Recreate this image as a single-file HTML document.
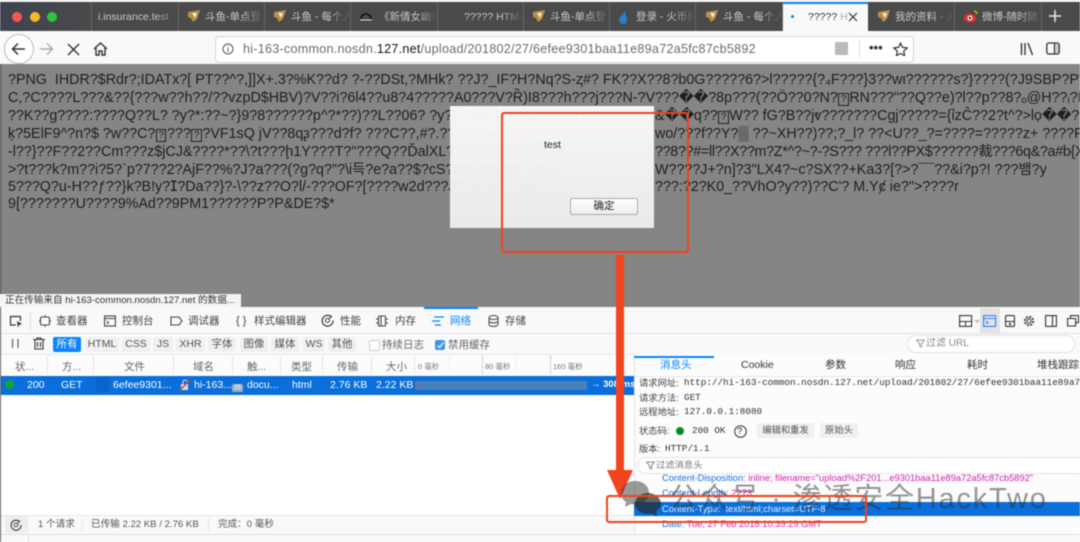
<!DOCTYPE html>
<html><head><meta charset="utf-8"><style>
html,body{margin:0;padding:0;width:1080px;height:542px;overflow:hidden;background:#fff}
#p{position:absolute;left:0;top:0;width:1080px;height:542px;overflow:hidden;filter:blur(.45px);font-family:"Liberation Sans","Noto Sans CJK SC",sans-serif;color:#333}
#p div,#p span,#p svg{position:absolute}
#p .q{position:static;border:1px solid #222;font-size:10px;padding:0 1.5px;margin:0 .5px}
.t{white-space:nowrap;line-height:14px;font-size:10.5px}
.m{font-family:"Liberation Mono","Noto Sans CJK SC",monospace;font-size:9.3px}
.tab{top:2px;height:29px;width:86px;border-right:1px solid #666;overflow:hidden}
.tab .t{color:#c9c9c9;top:8px;font-size:10.5px}
.tab i{position:absolute;right:0;top:0;width:22px;height:29px;background:linear-gradient(90deg,rgba(74,74,74,0),#4a4a4a)}
.c{color:#1e1e1e;font-size:14.3px;line-height:18px;height:18px;white-space:pre}
.chip{top:337px;height:15px;background:#f0f0f2;border-radius:2px;text-align:center;line-height:15px;font-size:10.5px;color:#555;white-space:nowrap}
.h{top:360px;color:#666}
.w{top:378px;color:#fff}
.vs{width:1px;background:#e4e4e6}
</style></head><body><div id="p">

<!-- tab bar -->
<div style="left:0;top:0;width:1080px;height:2px;background:#f3f3f3"></div>
<div style="left:0;top:2px;width:1080px;height:29px;background:#4a4a4a"></div>
<div style="left:0;top:2px;width:91px;height:29px;background:linear-gradient(90deg,#3d4350,#4a4a4a)"></div>
<div style="left:12px;top:12px;width:10px;height:10px;border-radius:50%;background:#f8584f"></div>
<div style="left:30px;top:12px;width:10px;height:10px;border-radius:50%;background:#fbb52c"></div>
<div style="left:47px;top:12px;width:10px;height:10px;border-radius:50%;background:#2ac83f"></div>
<div style="left:91px;top:2px;width:1px;height:29px;background:#666"></div>

<div class="tab" style="left:92px"><span class="t" style="left:6px">i.insurance.test</span><i></i></div>
<div class="tab" style="left:178px"><svg style="left:9px;top:7px" width="14" height="14" viewBox="0 0 14 14"><path d="M1 3l12-2-3 9-4 3-2-4-3-1z" fill="#b98f45"/><path d="M5 4l5 0-2 5z" fill="#eee"/></svg><span class="t" style="left:27px">斗鱼-单点登</span><i></i></div>
<div class="tab" style="left:264px"><svg style="left:9px;top:7px" width="14" height="14" viewBox="0 0 14 14"><path d="M1 3l12-2-3 9-4 3-2-4-3-1z" fill="#b98f45"/><path d="M5 4l5 0-2 5z" fill="#eee"/></svg><span class="t" style="left:27px">斗鱼 - 每个人</span><i></i></div>
<div class="tab" style="left:351px"><svg style="left:8px;top:8px" width="14" height="12" viewBox="0 0 14 12"><path d="M2 9a5 5 0 0 1 10 0" fill="none" stroke="#111" stroke-width="1.6"/><path d="M1 10h12" stroke="#ddd"/></svg><span class="t" style="left:28px">《新倩女幽魂</span><i></i></div>
<div class="tab" style="left:437px"><span class="t" style="left:27px">????? HTML</span><i></i></div>
<div class="tab" style="left:523px"><svg style="left:9px;top:7px" width="14" height="14" viewBox="0 0 14 14"><path d="M1 3l12-2-3 9-4 3-2-4-3-1z" fill="#b98f45"/><path d="M5 4l5 0-2 5z" fill="#eee"/></svg><span class="t" style="left:27px">斗鱼-单点登</span><i></i></div>
<div class="tab" style="left:609px"><svg style="left:8px;top:7px" width="12" height="15" viewBox="0 0 12 15"><path d="M8 1C8 5 2 7 2 11a4 4 0 0 0 8 0C10 8 8 5 8 1z" fill="#2a7fd0"/></svg><span class="t" style="left:27px">登录 - 火币网</span><i></i></div>
<div class="tab" style="left:696px"><svg style="left:9px;top:7px" width="14" height="14" viewBox="0 0 14 14"><path d="M1 3l12-2-3 9-4 3-2-4-3-1z" fill="#b98f45"/><path d="M5 4l5 0-2 5z" fill="#eee"/></svg><span class="t" style="left:27px">斗鱼 - 每个人</span><i></i></div>
<div class="tab" style="left:868px"><svg style="left:9px;top:7px" width="14" height="14" viewBox="0 0 14 14"><path d="M1 3l12-2-3 9-4 3-2-4-3-1z" fill="#b98f45"/><path d="M5 4l5 0-2 5z" fill="#eee"/></svg><span class="t" style="left:27px">我的资料 - 火</span><i></i></div>
<div class="tab" style="left:955px"><svg style="left:8px;top:7px" width="16" height="14" viewBox="0 0 16 14"><ellipse cx="7" cy="9" rx="6" ry="4.5" fill="#e0352b"/><circle cx="7" cy="9" r="2.4" fill="#fff"/><circle cx="7" cy="9" r="1.2" fill="#222"/><path d="M11 2a3 3 0 0 1 3 3" fill="none" stroke="#f5a623" stroke-width="1.4"/></svg><span class="t" style="left:27px">微博-随时随</span><i></i></div>
<svg style="left:1048px;top:9px" width="14" height="14" viewBox="0 0 14 14"><path d="M7 1v12M1 7h12" stroke="#e6e6e6" stroke-width="1.5"/></svg>

<div style="left:783px;top:2px;width:85px;height:29px;background:#f9f9fa"></div>
<div style="left:783px;top:2px;width:85px;height:2px;background:#0a84ff"></div>
<div style="left:791px;top:15px;width:3px;height:3px;border-radius:50%;background:#0a84ff"></div>
<span class="t" style="left:808px;top:10px;color:#333">????? <span style="position:static;color:#aaa">H</span></span>
<svg style="left:848px;top:12px" width="10" height="10" viewBox="0 0 10 10"><path d="M1 1l8 8M9 1l-8 8" stroke="#333" stroke-width="1.2"/></svg>

<!-- toolbar -->
<div style="left:0;top:31px;width:1080px;height:33px;background:#f9f9fa"></div>
<div style="left:4px;top:34px;width:28px;height:28px;border-radius:50%;background:#fff;border:1px solid #bbb"></div>
<svg style="left:11px;top:42px" width="15" height="14" viewBox="0 0 15 14"><path d="M14 7H2M7 1.500L1.500 7 7 12.500" fill="none" stroke="#333" stroke-width="1.5"/></svg>
<svg style="left:39px;top:42px" width="15" height="14" viewBox="0 0 15 14"><path d="M1 7h12M8 1.500L13.500 7 8 12.500" fill="none" stroke="#aaa" stroke-width="1.4"/></svg>
<svg style="left:67px;top:43px" width="13" height="13" viewBox="0 0 13 13"><path d="M1 1l11 11M12 1L1 12" stroke="#333" stroke-width="1.4"/></svg>
<svg style="left:93px;top:42px" width="15" height="14" viewBox="0 0 15 14"><path d="M1 7l6.500-6L14 7M3 6v7h3V9h3v4h3V6" fill="none" stroke="#333" stroke-width="1.4"/></svg>
<div style="left:215px;top:36px;width:697px;height:25px;background:#fff;border:1px solid #d4d4d4;border-radius:4px"></div>
<svg style="left:222px;top:43px" width="12" height="12" viewBox="0 0 12 12"><circle cx="6" cy="6" r="5" fill="none" stroke="#555"/><path d="M6 5v4M6 3v1" stroke="#555"/></svg>
<span class="t" style="left:243px;top:42px;font-size:12.6px;letter-spacing:.02em;color:#6b6b6b">hi-163-common.nosdn.<span style="position:static;color:#111">127.net</span>/upload/201802/27/6efee9301baa11e89a72a5fc87cb5892</span>
<div style="left:835px;top:42px;width:13px;height:13px;background:repeating-conic-gradient(#999 0 25%,#ddd 0 50%) 0 0/3px 3px"></div>
<div style="left:859px;top:39px;width:1px;height:20px;background:#ddd"></div>
<span class="t" style="left:869px;top:41px;font-size:13px;font-weight:bold;color:#333">•••</span>
<svg style="left:893px;top:42px" width="15" height="14" viewBox="0 0 15 14"><path d="M7.500 1l2 4.400 4.800.5-3.600 3.200 1 4.700-4.200-2.400-4.200 2.400 1-4.700L.7 5.900l4.800-.5z" fill="none" stroke="#333" stroke-width="1.2"/></svg>
<svg style="left:1020px;top:42px" width="14" height="14" viewBox="0 0 14 14"><path d="M1.500 1v12M5 1v12M8 1l4.500 12" fill="none" stroke="#333" stroke-width="1.4"/></svg>
<svg style="left:1046px;top:42px" width="14" height="13" viewBox="0 0 14 13"><rect x=".8" y="1" width="12.400" height="11" rx="2" fill="none" stroke="#333" stroke-width="1.3"/><path d="M8.500 1v11" stroke="#333" stroke-width="1.3"/><rect x="9" y="2" width="3.500" height="9" fill="#ccc"/></svg>

<!-- page content -->
<div style="left:0;top:64px;width:1080px;height:243px;background:#858585"></div>
<div style="left:0;top:64px;width:1px;height:243px;background:#333"></div>
<div class="c" style="left:8px;top:71px">?PNG  IHDR?$Rdr?;IDATx?[ PT??^?,]]X+.3?%K??d? ?-??DSt,?MHk? ??J?_IF?H?Nq?S-ⱬ#? FK??X??8?b0G?????6?&gt;l?????{?₄F???}3??wι??????s?}????(?J9SBP?P"DE?$*?</div>
<div class="c" style="left:8px;top:89px">C,?C????L???&amp;??{???w??h??/??vzpD$HBV)?V??i?6l4??u8?4?????A0???V?Ȑ)I8???h???j???N-?V???��?8p???(??Ö??0?N?<span class="q">?</span>RN???"??Q??e)?l??p??8?ₒ@H??ᵢ?Ⱨ</div>
<div class="c" style="left:8px;top:107px">??K??g????:????Q??L? ?y?*:??~?}9?8??????p^?*??)??L??06? ?y?F??d2JJ??h0??,??H??</div>
<div class="c" style="left:655px;top:107px">&amp;��q??<span class="q">?</span>W?? fG?B??jⱴ???????Cgj?????={ỉzĈ??2?t^?&gt;lọ��??l?</div>
<div class="c" style="left:8px;top:125px">ķ?5ElF9^?n?$ ?w??C?<span class="q">?</span>???<span class="q">?</span>?VF1sQ jV??8qᶔ???d?f? ???C??,#?.??????ɯ?????"?</div>
<div class="c" style="left:655px;top:125px">wo/???f??Y?▒ ??~XH??)??;?_l? ??&lt;U??_?=????=?????z+ ????P???</div>
<div class="c" style="left:8px;top:143px">-l??}??F??2??Cm???z$jCJ&amp;????*??\?t???ḩ1Y???T?"???Q??ĎalXL???????v?'i$?o??</div>
<div class="c" style="left:655px;top:143px;letter-spacing:-.3px">??8??#=ll??X??m?Z*^?~?-?S??? ???l??PX$??????裁???6q&amp;?a#b{X:</div>
<div class="c" style="left:8px;top:161px">&gt;?t???k?m??i?5?`p?7??2?AjF??%?J?a???(?g?q?"?\i득?e?a??$?cS?p?"??sz??`.?n?,"</div>
<div class="c" style="left:655px;top:161px">W????J+?n]?3"LX4?~c?SX??+Ka3?[?&gt;?¯¯??&amp;i?p?! ???뱀?y</div>
<div class="c" style="left:8px;top:178px">5???Q?u-H??ƒ??}k?B!y?ⵊ?Da??}?-\??z??O?l/-???OF?[????w2d???J??d?S??r?Q?</div>
<div class="c" style="left:655px;top:178px">???:?2?K0_??VhO?y??)??C'? M.Yȼ ie?"&gt;????r</div>
<div class="c" style="left:8px;top:195px">9[???????U????9%Ad??9PM1??????P?P&amp;DE?$*</div>

<!-- dialog -->
<div style="left:450px;top:106px;width:204px;height:122px;background:linear-gradient(180deg,rgba(252,252,252,.95),rgba(238,238,238,.97))"></div>
<span class="t" style="left:544px;top:138px;font-size:10.5px;color:#222">test</span>
<div style="left:570px;top:198px;width:66px;height:15px;background:linear-gradient(#fff,#eee);border:1px solid #aaa;border-radius:2px;text-align:center;font-size:10.5px;line-height:15px;color:#222">确定</div>

<!-- status tip -->
<div style="left:0;top:294px;width:241px;height:13px;background:#f4f4f4"></div>
<span class="t" style="left:5px;top:294px;font-size:9.6px;color:#333">正在传输来自 hi-163-common.nosdn.127.net 的数据...</span>

<!-- devtools -->
<div style="left:0;top:307px;width:1080px;height:27px;background:#f9f9fa"></div>
<div style="left:0;top:333px;width:1080px;height:1px;background:#e2e2e4"></div>
<div style="left:424px;top:307px;width:54px;height:2px;background:#0a84ff"></div>
<div style="left:980px;top:308px;width:20px;height:25px;background:#e3e3e6"></div>
<svg style="left:9px;top:315px" width="14" height="13" viewBox="0 0 14 13"><path d="M7 10H1.500V1.500h10V6" fill="none" stroke="#333" stroke-width="1.2"/><path d="M8 6l5 3-3 1-1 3z" fill="#333"/></svg>
<div style="left:30px;top:311px;width:1px;height:19px;background:#e0e0e0"></div>
<svg style="left:39px;top:315px" width="12" height="12" viewBox="0 0 12 12"><rect x="1.500" y="2" width="9" height="8" rx="1.500" fill="none" stroke="#444" stroke-width="1.1"/><path d="M0 6h1.500M10.500 6H12M6 0v2M6 10v2" stroke="#444"/></svg>
<span class="t" style="left:56px;top:314px;font-size:10.5px;color:#444">查看器</span>
<svg style="left:104px;top:315px" width="12" height="12" viewBox="0 0 12 12"><rect x=".6" y="1" width="10.800" height="10" fill="none" stroke="#444" stroke-width="1.1"/><path d="M.6 3.500h10.800M3 6l1.500 1.500L3 9" fill="none" stroke="#444"/></svg>
<span class="t" style="left:122px;top:314px;font-size:10.5px;color:#444">控制台</span>
<svg style="left:170px;top:316px" width="13" height="10" viewBox="0 0 13 10"><path d="M1 1h8l3 4-3 4H1z" fill="none" stroke="#444" stroke-width="1.1"/></svg>
<span class="t" style="left:188px;top:314px;font-size:10.5px;color:#444">调试器</span>
<span class="t" style="left:236px;top:314px;font-size:11px;color:#444">{ }</span>
<span class="t" style="left:254px;top:314px;font-size:10.5px;color:#444">样式编辑器</span>
<svg style="left:321px;top:314px" width="13" height="13" viewBox="0 0 13 13"><path d="M10.500 3a5.400 5.400 0 1 0 1.500 3.500" fill="none" stroke="#444" stroke-width="1.3"/><circle cx="6.500" cy="6.500" r="2" fill="none" stroke="#444"/><path d="M8 5l3-3" stroke="#444"/></svg>
<span class="t" style="left:340px;top:314px;font-size:10.5px;color:#444">性能</span>
<svg style="left:376px;top:315px" width="12" height="12" viewBox="0 0 12 12"><rect x="2.500" y="1" width="7" height="10" rx="1" fill="none" stroke="#444" stroke-width="1.1"/><path d="M0 4h2.500M0 8h2.500M9.500 4H12M9.500 8H12M5 1v10" stroke="#444"/></svg>
<span class="t" style="left:395px;top:314px;font-size:10.5px;color:#444">内存</span>
<svg style="left:432px;top:316px" width="13" height="10" viewBox="0 0 13 10"><path d="M2 1h10M0 5h8M3 9h6" stroke="#0a84ff" stroke-width="1.2"/></svg>
<span class="t" style="left:450px;top:314px;font-size:10.5px;color:#0a84ff">网络</span>
<svg style="left:488px;top:315px" width="11" height="12" viewBox="0 0 11 12"><ellipse cx="5.500" cy="2.500" rx="4.500" ry="2" fill="none" stroke="#444"/><path d="M1 2.500v7c0 1 2 2 4.500 2s4.500-1 4.500-2v-7M1 6c0 1 2 2 4.500 2s4.500-1 4.500-2" fill="none" stroke="#444"/></svg>
<span class="t" style="left:505px;top:314px;font-size:10.5px;color:#444">存储</span>

<svg style="left:959px;top:315px" width="22" height="12" viewBox="0 0 22 12"><rect x=".6" y=".6" width="12" height="10.800" fill="none" stroke="#333" stroke-width="1.1"/><path d="M.6 6.500h12M6.600 6.500v5" stroke="#333"/><path d="M15 5h6l-3 3z" fill="#bbb"/></svg>
<svg style="left:983px;top:315px" width="14" height="12" viewBox="0 0 14 12"><rect x=".6" y=".6" width="12" height="10.800" fill="none" stroke="#2f86e6" stroke-width="1.1"/><path d="M.6 3.500h12M3 6l2 1.500L3 9" fill="none" stroke="#2f86e6"/></svg>
<svg style="left:1005px;top:315px" width="10" height="12" viewBox="0 0 10 12"><rect x=".6" y=".6" width="8.800" height="10.800" rx="1" fill="none" stroke="#333" stroke-width="1.1"/><path d="M.6 6.500h8.800" stroke="#333"/><rect x="4" y="8" width="2" height="2" fill="#333"/></svg>
<svg style="left:1023px;top:315px" width="12" height="12" viewBox="0 0 12 12"><circle cx="6" cy="6" r="2" fill="none" stroke="#333"/><circle cx="6" cy="6" r="4.200" fill="none" stroke="#333" stroke-width="1.800" stroke-dasharray="2 1.300"/></svg>
<svg style="left:1045px;top:315px" width="12" height="12" viewBox="0 0 12 12"><rect x=".6" y=".6" width="10.800" height="10.800" fill="none" stroke="#333" stroke-width="1.1"/><path d="M7.500 .6v10.800" stroke="#333" stroke-width="1.100"/></svg>
<svg style="left:1067px;top:315px" width="12" height="12" viewBox="0 0 12 12"><path d="M3.500 3V.6h8v7H9M.6 3.500h8v7.500h-8z" fill="none" stroke="#333" stroke-width="1.1"/></svg>

<div style="left:0;top:334px;width:1080px;height:20px;background:#f9f9fa"></div>
<svg style="left:11px;top:339px" width="9" height="9" viewBox="0 0 9 9"><path d="M1.500 0v9M7 0v9" stroke="#555" stroke-width="1.1"/></svg>
<svg style="left:33px;top:337px" width="12" height="13" viewBox="0 0 12 13"><path d="M0 2.500h12M4 2.500V1h4v1.500M2 2.500V12h8V2.500M4.500 5v5M7.500 5v5" fill="none" stroke="#333" stroke-width="1.1"/></svg>
<div class="chip" style="left:53px;width:28px;background:#0a84ff;color:#fff">所有</div>
<div class="chip" style="left:85px;width:34px">HTML</div>
<div class="chip" style="left:122px;width:28px">CSS</div>
<div class="chip" style="left:153px;width:20px">JS</div>
<div class="chip" style="left:176px;width:29px">XHR</div>
<div class="chip" style="left:208px;width:28px">字体</div>
<div class="chip" style="left:240px;width:28px">图像</div>
<div class="chip" style="left:271px;width:28px">媒体</div>
<div class="chip" style="left:303px;width:22px">WS</div>
<div class="chip" style="left:328px;width:28px">其他</div>
<div style="left:369px;top:340px;width:9px;height:9px;border:1px solid #ccc;border-radius:2px;background:#fff"></div>
<span class="t" style="left:382px;top:338px;color:#666">持续日志</span>
<div style="left:435px;top:340px;width:10px;height:10px;border-radius:2px;background:#3b95ee"></div>
<svg style="left:436px;top:341px" width="9" height="9" viewBox="0 0 9 9"><path d="M1.500 4.500l2 2 4-5" fill="none" stroke="#fff" stroke-width="1.200"/></svg>
<span class="t" style="left:448px;top:338px;color:#666">禁用缓存</span>
<div style="left:907px;top:335px;width:166px;height:16px;background:#fff;border:1px solid #e2e2e2;border-radius:9px"></div>
<svg style="left:916px;top:339px" width="9" height="9" viewBox="0 0 9 9"><path d="M.5 1h8L5.500 4.500V8L3.500 7V4.500z" fill="none" stroke="#999"/></svg>
<span class="t" style="left:926px;top:337px;font-size:10px;color:#888">过滤 URL</span>

<div style="left:0;top:354px;width:634px;height:22px;background:#fcfcfc;border-top:1px solid #e6e6e6"></div>
<span class="t h" style="left:15px">状...</span><div class="vs" style="left:47px;top:356px;height:18px"></div>
<span class="t h" style="left:62px">方...</span><div class="vs" style="left:93px;top:356px;height:18px"></div>
<span class="t h" style="left:124px">文件</span><div class="vs" style="left:173px;top:356px;height:18px"></div>
<span class="t h" style="left:193px">域名</span><div class="vs" style="left:232px;top:356px;height:18px"></div>
<span class="t h" style="left:247px">触...</span><div class="vs" style="left:280px;top:356px;height:18px"></div>
<span class="t h" style="left:291px">类型</span><div class="vs" style="left:322px;top:356px;height:18px"></div>
<span class="t h" style="left:337px">传输</span><div class="vs" style="left:371px;top:356px;height:18px"></div>
<span class="t h" style="left:386px">大小</span><div class="vs" style="left:414px;top:356px;height:18px"></div>
<span class="t" style="left:418px;top:360px;font-size:7.5px;color:#777">0 毫秒</span>
<span class="t" style="left:485px;top:360px;font-size:7.5px;color:#777">80 毫秒</span>
<span class="t" style="left:553px;top:360px;font-size:7.5px;color:#777">160 毫秒</span>
<div style="left:482px;top:356px;height:18px;border-left:1px dotted #aaa"></div>
<div style="left:550px;top:356px;height:18px;border-left:1px dotted #aaa"></div>
<div style="left:449px;top:356px;height:18px;width:1px;background:#eee"></div>
<div style="left:516px;top:356px;height:18px;width:1px;background:#eee"></div>

<div style="left:0;top:376px;width:634px;height:19px;background:#0a6fdb"></div>
<div style="left:5px;top:380px;width:9px;height:9px;border-radius:50%;background:#12a530"></div>
<span class="t w" style="left:27px">200</span>
<span class="t w" style="left:61px">GET</span>
<div style="left:96px;top:377px;width:13px;height:15px;background:#0a63ca"></div>
<span class="t w" style="left:113px">6efee9301...</span>
<svg style="left:179px;top:379px" width="12" height="12" viewBox="0 0 12 12"><rect x="2" y="5" width="7" height="6" fill="#d9dde6"/><path d="M4 5V3a2 2 0 0 1 4 0" fill="none" stroke="#d9dde6"/><path d="M1 11L11 1" stroke="#e0352b" stroke-width="1.500"/></svg>
<span class="t w" style="left:194px">hi-163...</span>
<div style="left:232px;top:384px;width:11px;height:8px;background:#9fb0c6;border-radius:2px;color:#fff;font-size:6px;line-height:8px;text-align:center">JS</div>
<span class="t w" style="left:247px">docu...</span>
<span class="t w" style="left:292px">html</span>
<span class="t w" style="left:330px">2.76 KB</span>
<span class="t w" style="left:376px">2.22 KB</span>
<div style="left:415px;top:381px;width:172px;height:9px;background:#4a80b8"></div>
<div style="left:415px;top:381px;width:1px;height:9px;background:#d44"></div>
<span class="t w" style="left:591px;font-weight:bold;font-size:9.5px">→ 308 ms</span>

<!-- right panel -->
<div style="left:634px;top:354px;width:446px;height:180px;background:#fcfcfc;border-left:1px solid #e2e2e4"></div>
<div style="left:634px;top:356px;width:80px;height:2px;background:#0a84ff"></div>
<div style="left:634px;top:376px;width:446px;height:1px;background:#e6e6e6"></div>
<span class="t" style="left:660px;top:358px;font-size:10.5px;color:#0a84ff">消息头</span>
<span class="t" style="left:741px;top:358px;font-size:10.5px;color:#333">Cookie</span>
<span class="t" style="left:825px;top:358px;font-size:10.5px;color:#333">参数</span>
<span class="t" style="left:895px;top:358px;font-size:10.5px;color:#333">响应</span>
<span class="t" style="left:967px;top:358px;font-size:10.5px;color:#333">耗时</span>
<span class="t" style="left:1037px;top:358px;font-size:10.5px;color:#333">堆栈跟踪</span>

<span class="t" style="left:639px;top:376px;font-size:9.3px;color:#444">请求网址:</span><span class="t m" style="left:684px;top:376px;color:#333">http://hi-163-common.nosdn.127.net/upload/201802/27/6efee9301baa11e89a7</span>
<span class="t" style="left:639px;top:391px;font-size:9.3px;color:#444">请求方法:</span><span class="t m" style="left:684px;top:391px;color:#333">GET</span>
<span class="t" style="left:639px;top:405px;font-size:9.3px;color:#444">远程地址:</span><span class="t m" style="left:684px;top:405px;color:#333">127.0.0.1:8080</span>
<span class="t" style="left:639px;top:424px;font-size:9.3px;color:#444">状态码:</span>
<div style="left:676px;top:427px;width:8px;height:8px;border-radius:50%;background:#0a8a1e"></div>
<span class="t m" style="left:692px;top:424px;color:#333">200 OK</span>
<svg style="left:734px;top:425px" width="13" height="13" viewBox="0 0 13 13"><circle cx="6.500" cy="6.500" r="5.800" fill="none" stroke="#333"/></svg>
<span class="t" style="left:737px;top:425px;font-size:9.5px;color:#222">?</span>
<div style="left:757px;top:423px;width:57px;height:15px;background:#f0f0f2;border-radius:2px;text-align:center;font-size:9.3px;line-height:15px;color:#555">编辑和重发</div>
<div style="left:820px;top:423px;width:38px;height:15px;background:#f0f0f2;border-radius:2px;text-align:center;font-size:9.3px;line-height:15px;color:#555">原始头</div>
<span class="t" style="left:639px;top:442px;font-size:9.3px;color:#444">版本:</span><span class="t m" style="left:665px;top:442px;color:#333">HTTP/1.1</span>
<div style="left:637px;top:457px;width:450px;height:15px;background:#fff;border:1px solid #e4e4e4;border-radius:8px"></div>
<svg style="left:646px;top:461px" width="9" height="9" viewBox="0 0 9 9"><path d="M.5 1h8L5.500 4.500V8L3.500 7V4.500z" fill="none" stroke="#888"/></svg>
<span class="t" style="left:656px;top:458px;font-size:9.3px;color:#777">过滤消息头</span>
<span class="t" style="left:662px;top:471px;font-size:9.3px;color:#1a6fe0">Content-Disposition: <span style="position:static;color:#d61fa8">inline; filename="upload%2F201...e9301baa11e89a72a5fc87cb5892"</span></span>
<span class="t" style="left:662px;top:486px;font-size:9.3px;color:#1a6fe0">Content-Length: <span style="position:static;color:#d61fa8">2273</span></span>
<div style="left:634px;top:502px;width:446px;height:14px;background:#0a6fdb"></div>
<span class="t" style="left:662px;top:502px;font-size:9.3px;color:#e8f0ff">Content-Type:&nbsp; text/html;charset=UTF-8</span>
<span class="t" style="left:662px;top:517px;font-size:9.3px;color:#1a6fe0">Date: <span style="position:static;color:#d61fa8">Tue, 27 Feb 2018 10:39:29 GMT</span></span>

<!-- bottom status -->
<div style="left:0;top:515px;width:634px;height:19px;background:#f9f9fa;border-top:1px solid #e6e6e6"></div>
<div style="left:5px;top:516px;width:23px;height:17px;background:#eeeeef"></div>
<svg style="left:10px;top:519px" width="12" height="12" viewBox="0 0 13 13"><path d="M10.500 3a5.400 5.400 0 1 0 1.500 3.500" fill="none" stroke="#444" stroke-width="1.300"/><circle cx="6.500" cy="6.500" r="2" fill="none" stroke="#444"/><path d="M8 5l3-3" stroke="#444"/></svg>
<span class="t" style="left:38px;top:518px;font-size:9.6px;color:#555">1 个请求</span>
<div class="vs" style="left:82px;top:518px;height:13px"></div>
<span class="t" style="left:91px;top:518px;font-size:9.6px;color:#555">已传输 2.22 KB / 2.76 KB</span>
<div class="vs" style="left:208px;top:518px;height:13px"></div>
<span class="t" style="left:218px;top:518px;font-size:9.6px;color:#555">完成：0 毫秒</span>
<div style="left:0;top:534px;width:1080px;height:8px;background:#f9f9fa;border-top:1px solid #ddd"></div>
<div style="left:28px;top:535px;width:1px;height:7px;background:#ddd"></div>
<div style="left:0;top:307px;width:1px;height:235px;background:#555"></div>

<!-- annotations -->
<div style="left:501px;top:112px;width:184px;height:137px;border:2px solid #f0421e;border-radius:3px"></div>
<div style="left:616px;top:255px;width:8px;height:216px;background:#f4431f"></div>
<svg style="left:606px;top:469px" width="28" height="30" viewBox="0 0 28 30"><path d="M1 1h26L14 30z" fill="#f4431f"/></svg>

<!-- watermark -->
<svg style="left:619px;top:480px" width="44" height="38" viewBox="0 0 44 38"><path d="M16 1C8 1 2 6 2 13c0 4 2 7 5 9l-1 5 6-3c2 .5 3 .5 5 .5C25 24.500 30 19 30 13 30 6 24 1 16 1z" fill="rgba(70,70,70,.55)"/><path d="M29 13c-7 0-13 5-13 11s6 10 13 10c1.500 0 3 0 4-.5l5 3-1-5c3-2 5-4.500 5-7.500 0-6-6-11-13-11z" fill="rgba(40,40,40,.7)"/></svg>
<span class="t" style="left:669px;top:484px;font-size:29px;line-height:30px;letter-spacing:1.8px;color:rgba(45,45,45,.5)">公众号 · 渗透安全HackTwo</span>

<div style="left:606px;top:495px;width:257px;height:24px;border:2px solid #f0421e;border-radius:3px"></div>
</div></body></html>
